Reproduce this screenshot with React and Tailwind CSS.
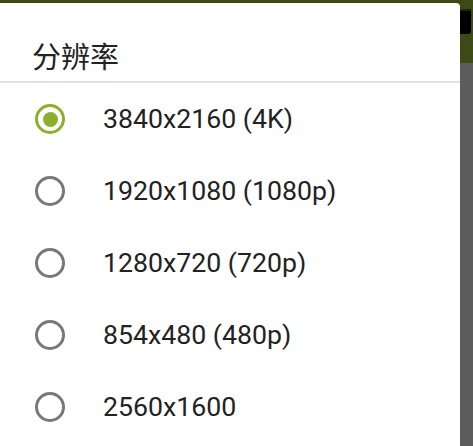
import React, { useState } from 'react';

const options = [
  '3840x2160 (4K)',
  '1920x1080 (1080p)',
  '1280x720 (720p)',
  '854x480 (480p)',
  '2560x1600',
];

function Radio({ checked }) {
  return (
    <span
      className={`flex h-[30px] w-[30px] shrink-0 items-center justify-center rounded-full border-[3px] ${
        checked ? 'border-[#8cb02d]' : 'border-[#787878]'
      }`}
    >
      {checked && <span className="h-[15px] w-[15px] rounded-full bg-[#8cb02d]" />}
    </span>
  );
}

export default function App() {
  const [selected, setSelected] = useState(0);

  return (
    <div className="relative h-[446px] w-[473px] overflow-hidden bg-[#5c5c5c]">
      {/* Dimmed toolbar behind the dialog */}
      <div className="flex h-[63px] justify-end bg-[#3e4916]">
        <div className="mt-[9px] h-[25px] w-[11px] rounded-br-[3px] border-t-2 border-[#1e2408] bg-black" />
        <div className="w-[2px]" />
      </div>

      {/* Dialog */}
      <div className="absolute bottom-0 left-0 top-[3px] flex w-[460px] flex-col rounded-tr-[4px] bg-white">
        <div className="h-[80px] border-b-2 border-[#e2e2e2] px-[32px] pt-[37px]">
          <h2 className="text-[29px] leading-[30px] text-[#222] [font-family:'Noto_Sans_CJK_SC',sans-serif]">
            分辨率
          </h2>
        </div>

        <ul className="flex flex-col">
          {options.map((label, i) => (
            <li
              key={label}
              onClick={() => setSelected(i)}
              className="flex h-[72px] cursor-pointer items-center pl-[35px]"
            >
              <Radio checked={selected === i} />
              <span className="ml-[38px] text-[26.7px] text-[#222] [font-family:Roboto,sans-serif]">
                {label}
              </span>
            </li>
          ))}
        </ul>
      </div>
    </div>
  );
}
